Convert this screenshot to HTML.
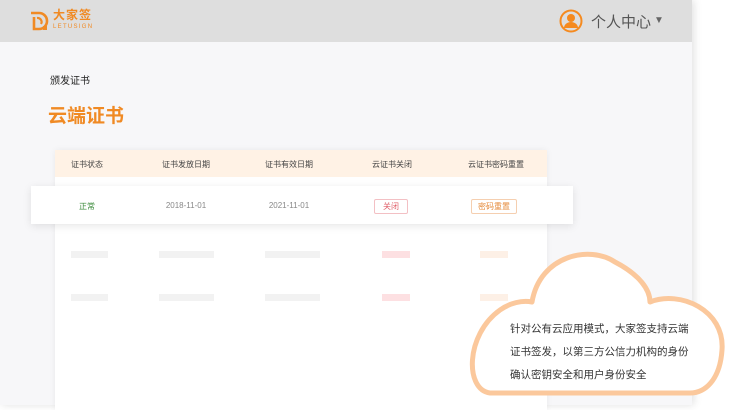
<!DOCTYPE html>
<html><head><meta charset="utf-8"><style>
*{margin:0;padding:0;box-sizing:border-box}
body{width:733px;height:405px;overflow:hidden;background:#fff;font-family:"Liberation Sans","Noto Sans CJK SC",sans-serif;position:relative}
.app{position:absolute;left:0;top:0;width:692px;height:405px;background:#f7f7f9;box-shadow:2px 0 8px rgba(0,0,0,.12)}
.hdr{position:absolute;left:0;top:0;width:692px;height:42px;background:#dedede}
.abs{position:absolute}
.card{position:absolute;left:55px;top:150px;width:492px;height:260px;background:#fff;box-shadow:0 0 6px rgba(0,0,0,.06)}
.th{position:absolute;left:55px;top:150px;width:492px;height:27px;background:#fff2e5}
.c{position:absolute;transform:translateX(-50%);font-size:8px;white-space:nowrap}
.row{position:absolute;left:31px;top:186px;width:542px;height:38px;background:#fff;box-shadow:0 2px 8px rgba(0,0,0,.1)}
.bar{position:absolute;height:7px}
</style></head><body>
<div class="app">
<div class="hdr">
<svg class="abs" style="left:28px;top:10px" width="22" height="22" viewBox="0 0 22 22"><path d="M3 3h8a8 8 0 0 1 0 16H6V7" fill="none" stroke="#f08a24" stroke-width="2.6"/><path d="M9 8a4 4 0 0 1 4 6" fill="none" stroke="#f08a24" stroke-width="2.2"/><rect x="15" y="16" width="4" height="4" fill="#f08a24"/></svg>
<div class="abs" style="left:53px;top:9px;font-size:12px;line-height:13px;font-weight:bold;color:#f08a24;letter-spacing:1px">大家签</div>
<div class="abs" style="left:53px;top:24px;font-size:6px;line-height:7px;color:#f08a24;letter-spacing:1.3px">LETUSIGN</div>
<svg class="abs" style="left:559px;top:9px" width="24" height="24" viewBox="0 0 24 24"><circle cx="12" cy="12" r="10.5" fill="none" stroke="#f58a1f" stroke-width="2"/><circle cx="12" cy="9" r="4" fill="#f58a1f"/><path d="M5 19a7 6 0 0 1 14 0z" fill="#f58a1f"/></svg>
<div class="abs" style="left:591px;top:11px;font-size:15px;color:#555">个人中心</div>
<div class="abs" style="left:654px;top:15px;font-size:10px;color:#666">▼</div>
</div>
<div class="abs" style="left:50px;top:72px;font-size:10px;color:#222">颁发证书</div>
<div class="abs" style="left:48px;top:101px;font-size:19px;font-weight:bold;color:#f08a24">云端证书</div>
<div class="card"></div>
<div class="th">
<div class="c" style="left:32px;top:9px;color:#444">证书状态</div>
<div class="c" style="left:131px;top:9px;color:#444">证书发放日期</div>
<div class="c" style="left:234px;top:9px;color:#444">证书有效日期</div>
<div class="c" style="left:337px;top:9px;color:#444">云证书关闭</div>
<div class="c" style="left:441px;top:9px;color:#444">云证书密码重置</div>
</div>
<div class="row">
<div class="c" style="left:56px;top:15px;color:#3a8a3a">正常</div>
<div class="c" style="left:155px;top:15px;color:#888">2018-11-01</div>
<div class="c" style="left:258px;top:15px;color:#888">2021-11-01</div>
<div class="c" style="left:360px;top:13px;color:#e0606a;border:1px solid #f3c0c4;border-radius:2px;padding:1px 8px">关闭</div>
<div class="c" style="left:463px;top:13px;color:#e58a3a;border:1px solid #f5cfb0;border-radius:2px;padding:1px 6px">密码重置</div>
</div>
<div class="bar" style="left:71px;top:251px;width:37px;background:#f2f2f2"></div>
<div class="bar" style="left:159px;top:251px;width:55px;background:#f2f2f2"></div>
<div class="bar" style="left:265px;top:251px;width:55px;background:#f2f2f2"></div>
<div class="bar" style="left:382px;top:251px;width:28px;background:#fde0e2"></div>
<div class="bar" style="left:480px;top:251px;width:28px;background:#fdf0e6"></div>
<div class="bar" style="left:71px;top:294px;width:37px;background:#f2f2f2"></div>
<div class="bar" style="left:159px;top:294px;width:55px;background:#f2f2f2"></div>
<div class="bar" style="left:265px;top:294px;width:55px;background:#f2f2f2"></div>
<div class="bar" style="left:382px;top:294px;width:28px;background:#fde0e2"></div>
<div class="bar" style="left:480px;top:294px;width:28px;background:#fdf0e6"></div>
</div>
<svg class="abs" style="left:0;top:0" width="733" height="405" viewBox="0 0 733 405">
<path d="M490 393 C465 390 465 335 500 310 C510 303 522 300 532 302 C540 255 590 245 615 262 C640 275 650 290 650 302 C680 290 725 310 722 350 C720 380 705 393 690 393 Z" fill="#fff" stroke="#fbc89c" stroke-width="5" stroke-linejoin="round"/>
</svg>
<div class="abs" style="left:510px;top:318px;font-size:10.5px;line-height:23px;color:#333;width:210px">针对公有云应用模式，大家签支持云端<br>证书签发，以第三方公信力机构的身份<br>确认密钥安全和用户身份安全</div>
</body></html>
